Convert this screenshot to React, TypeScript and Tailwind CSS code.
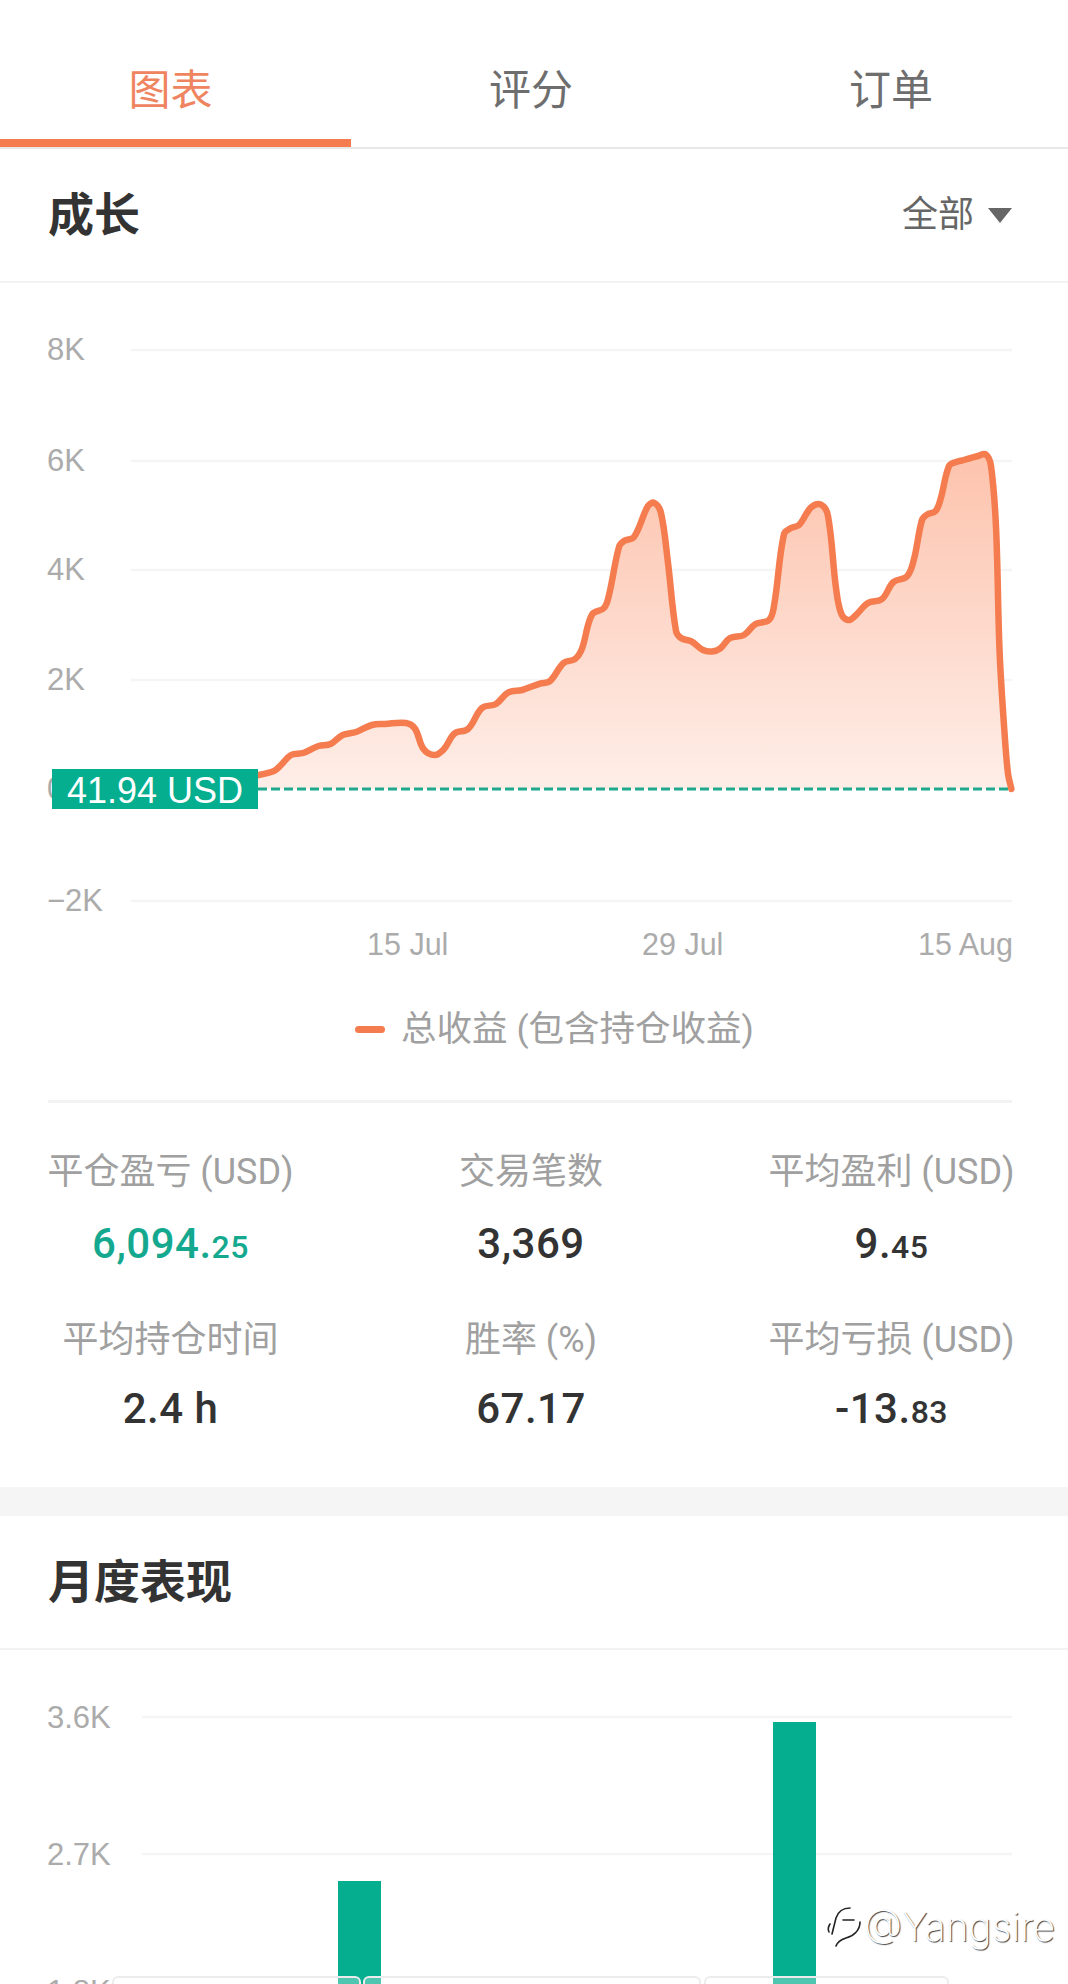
const pts: [number, number][] = [
  [236, 778], [258, 775], [274, 771], [281, 765], [291, 755], [303, 753], [318.5, 746], [330.6, 744], [342.6, 735], [356, 732], [372, 725],
  [385, 724], [406, 723], [415, 728.6], [423.5, 749], [434.6, 755], [444, 749], [454.5, 733.5], [468, 729], [482, 708], [496, 704],
  [508, 692.6], [522, 690], [540, 683.6], [550, 681], [563.6, 663], [575, 659], [582, 648.6], [592, 614.6], [604, 608], [609, 595],
  [619, 547], [624, 541], [634, 537], [648, 506], [654.5, 503], [661, 513], [668, 563], [676, 631], [681, 638], [691.5, 641.4],
  [703, 650], [712, 651.4], [720, 648.6], [730, 638], [744, 635], [755.5, 624], [769, 620], [774, 606], [784, 534], [791, 528],
  [799, 525], [811, 507.5], [821, 504.6], [828, 516], [836, 588], [841, 613], [848, 620], [855, 616], [868, 603], [882, 599],
  [893.5, 582], [907, 576.4], [914, 559], [922, 520], [927, 514.6], [935.6, 511], [940.7, 498.6], [949, 466], [956, 462],
  [964, 460], [978, 456], [986, 454.6], [991, 466], [996, 527], [999.6, 652], [1004.6, 734], [1008, 773.6], [1011.4, 789],
];

function smooth(p: [number, number][]) {
  const n = p.length;
  const unit = (i: number): [number, number] => {
    const a = p[Math.max(0, i - 1)];
    const c = p[Math.min(n - 1, i + 1)];
    const dx = c[0] - a[0];
    const dy = c[1] - a[1];
    const l = Math.hypot(dx, dy) || 1;
    return [dx / l, dy / l];
  };
  let d = `M${p[0][0]} ${p[0][1]}`;
  for (let i = 0; i < n - 1; i++) {
    const b = p[i];
    const c = p[i + 1];
    const h = Math.hypot(c[0] - b[0], c[1] - b[1]) * 0.35;
    const t0 = unit(i);
    const t1 = unit(i + 1);
    d += ` C${(b[0] + t0[0] * h).toFixed(1)} ${(b[1] + t0[1] * h).toFixed(1)} ${(c[0] - t1[0] * h).toFixed(1)} ${(c[1] - t1[1] * h).toFixed(1)} ${c[0]} ${c[1]}`;
  }
  return d;
}

const line = smooth(pts);
const area = `${line} L236 789 Z`;

const axisFont = { fontFamily: "'Liberation Sans', sans-serif", fontSize: 31, fill: "#ababab" };
const dateFont = { ...axisFont, fontSize: 30.5 };

function GrowthChart() {
  const rows: [string, number][] = [["8K", 350], ["6K", 461], ["4K", 570], ["2K", 680], ["0K", 789], ["-2K", 901]];
  return (
    <div className="relative h-[702px]">
      <svg width="1068" height="702" viewBox="0 283 1068 702" className="block">
        <defs>
          <linearGradient id="growthFill" gradientUnits="userSpaceOnUse" x1="0" y1="455" x2="0" y2="789">
            <stop offset="0" stopColor="#fdc3ad" />
            <stop offset="1" stopColor="#feeee8" />
          </linearGradient>
        </defs>
        {rows.map(([label, y]) => (
          <g key={label}>
            {label !== "0K" && <line x1="131" x2="1012" y1={y} y2={y} stroke="#f5f5f5" strokeWidth="2.5" />}
            <text x="47" y={y + 10} {...axisFont}>{label === "-2K" ? "−2K" : label}</text>
          </g>
        ))}
        <path d={area} fill="url(#growthFill)" />
        <line x1="258" x2="1012" y1="789" y2="789" stroke="#1fa88c" strokeWidth="3" strokeDasharray="9 4" />
        <path d={line} fill="none" stroke="#f47c4e" strokeWidth="6.5" strokeLinejoin="round" strokeLinecap="round" />
        <text x="367" y="955" {...dateFont}>15 Jul</text>
        <text x="642" y="955" {...dateFont}>29 Jul</text>
        <text x="918" y="955" {...dateFont}>15 Aug</text>
      </svg>
      <div className="absolute left-[52px] top-[486px] flex h-[40px] w-[206px] items-center justify-center bg-[#04ae8f] pt-[3px] font-['Liberation_Sans',sans-serif] text-[36px] leading-none text-white">
        41.94 USD
      </div>
    </div>
  );
}

function Stat({ label, value, small, green, lower }: { label: string; value: string; small?: string; green?: boolean; lower?: boolean }) {
  return (
    <div className="flex flex-col items-center whitespace-nowrap">
      <div className="text-[36px] leading-[48px] text-[#a0a0a0]">{label}</div>
      <div className={`${lower ? "mt-[17px]" : "mt-[20px]"} text-[42px] font-medium leading-[56px] tracking-[0.5px] ${green ? "text-[#14a98f]" : "text-[#333333]"}`}>
        {value}
        {small && <span className="text-[32px] leading-none">{small}</span>}
      </div>
    </div>
  );
}

function MonthlyChart() {
  return (
    <div className="relative h-[334px] overflow-hidden">
      <svg width="1068" height="334" viewBox="0 1650 1068 334" className="block">
        <line x1="142" x2="1012" y1="1717" y2="1717" stroke="#f5f5f5" strokeWidth="2.5" />
        <line x1="142" x2="1012" y1="1854" y2="1854" stroke="#f5f5f5" strokeWidth="2.5" />
        <text x="47" y="1728" {...axisFont}>3.6K</text>
        <text x="47" y="1865" {...axisFont}>2.7K</text>
        <text x="47" y="2002" {...axisFont}>1.8K</text>
        <rect x="338" y="1881" width="43" height="110" fill="#04ae8f" />
        <rect x="773" y="1722" width="43" height="270" fill="#04ae8f" />
      </svg>
      <div className="absolute left-[112px] top-[326px] flex h-[20px] gap-[2px]">
        <div className="h-full w-[249px] rounded-t-[6px] border-2 border-[#ececec] bg-white/30" />
        <div className="h-full w-[338px] rounded-t-[6px] border-2 border-[#ececec] bg-white/30" />
        <div className="ml-[1px] h-full w-[245px] rounded-t-[6px] border-2 border-[#ececec] bg-white/30" />
      </div>
      <div className="absolute left-[826px] top-[254px] flex items-center gap-[2px]">
        <svg width="36" height="44" viewBox="0 0 36 44" fill="none" stroke="#222" strokeWidth="1.6" strokeLinecap="round">
          <path d="M24 4 C16 4 12 8 10 14 L6 30" />
          <path d="M4 20 C2 23 2 26 3 28" />
          <path d="M17 16 L28 16" />
          <path d="M34 18 C34 26 28 32 20 34 C14 36 11 39 10 42" />
        </svg>
        <span className="font-['Inter',sans-serif] text-[39px] font-extralight leading-none text-white [text-shadow:1px_1px_1px_rgba(0,0,0,0.75)]">
          @Yangsire
        </span>
      </div>
    </div>
  );
}

export default function App() {
  return (
    <div className="h-[1984px] w-[1068px] overflow-hidden bg-white font-['Roboto','Noto_Sans_CJK_SC',sans-serif]">
      <div className="flex h-[149px] border-b-2 border-[#e8e8e8] text-center text-[42px] leading-[48px]">
        <div className="h-[147px] w-[351px] border-b-8 border-[#f47c4e] pr-[10px] pt-[67px] text-[#ef8560]">图表</div>
        <div className="w-[360px] pt-[67px] text-[#6e6e6e]">评分</div>
        <div className="flex-1 pl-[3px] pt-[67px] text-[#6e6e6e]">订单</div>
      </div>

      <div className="flex h-[134px] items-center justify-between border-b-2 border-[#f2f2f2] pl-12 pr-[56px]">
        <div className="text-[46px] font-bold leading-[56px] text-[#333333]">成长</div>
        <div className="flex items-center gap-[14px]">
          <span className="text-[36px] leading-[44px] text-[#666666]">全部</span>
          <svg width="24" height="15" viewBox="0 0 24 15"><path d="M0 0H24L12 15Z" fill="#666666" /></svg>
        </div>
      </div>

      <GrowthChart />

      <div className="flex h-[115px] items-start justify-center pl-[41px] pt-[20px]">
        <div className="flex h-[48px] items-center gap-[16px]">
          <div className="h-[7px] w-[30px] rounded-full bg-[#f47c4e]" />
          <div className="text-[35.5px] leading-[48px] text-[#a0a0a0]">总收益 (包含持仓收益)</div>
        </div>
      </div>

      <div className="ml-12 mr-[56px] h-[3px] bg-[#f2f2f2]" />

      <div className="grid grid-cols-[245px_245px_245px] justify-between gap-y-[44px] pb-[50px] pl-12 pr-[54px] pt-[45px]">
        <Stat label="平仓盈亏 (USD)" value="6,094." small="25" green />
        <Stat label="交易笔数" value="3,369" />
        <Stat label="平均盈利 (USD)" value="9." small="45" />
        <Stat label="平均持仓时间" value="2.4 h" lower />
        <Stat label="胜率 (%)" value="67.17" lower />
        <Stat label="平均亏损 (USD)" value="-13." small="83" lower />
      </div>

      <div className="h-[29px] bg-[#f5f5f5]" />

      <div className="flex h-[134px] items-center border-b-2 border-[#f2f2f2] px-12">
        <div className="text-[46px] font-bold leading-[56px] text-[#333333]">月度表现</div>
      </div>

      <MonthlyChart />
    </div>
  );
}
